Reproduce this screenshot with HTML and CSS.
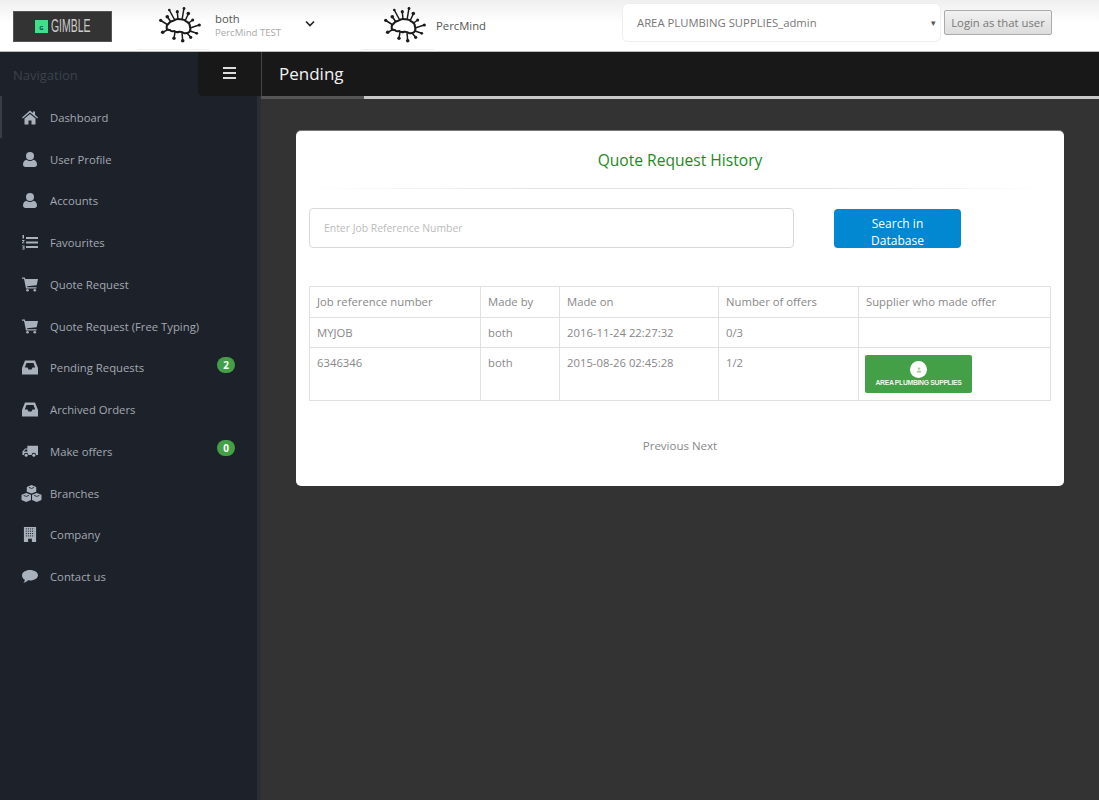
FILE: index.html
```html
<!DOCTYPE html>
<html lang="en">
<head>
    <meta charset="UTF-8">
    <meta name="viewport" content="width=device-width, initial-scale=1.0">
    <title>Pending</title>
    <link rel="stylesheet" href="styles.css">
</head>
<body>
    <svg class="defs" width="0" height="0">
        <symbol id="brain" viewBox="0 0 44 38">
            <g fill="none" stroke="#1a1a1a" stroke-width="1.500">
                <path d="M7.700 21.300C7.500 19 8 17.500 9.300 17c1-2 3-3 5-3.300 2-1.500 5-2 6.700-1.400 2.500-.2 5 .6 6.700 2.400 2 1 3.300 3 3.300 5 .6 2 .4 4-.5 5-1.500 1.500-3.500 1.800-5.200 1.600-1.800-1.500-3.500-1.700-5-1.600-1.800.7-3.600.5-5-.7-1.800.5-3.300.2-4-.7-1.500-.2-2.700-.4-3.500-1.300z" stroke-width="2"/>
                <path d="M1 13L9 18M8.300 9.700L12 15M10.300 3L16 13.500M18.300 4.700L19 12.500M25 1L23 13M29.300 7L26 14M33.700 13L29 16.500M40.300 18L31 21M37.700 26.300L31 24M31.700 30.300L28 26M23.700 33.700L23 25.500M15 31.300L16 25M3.700 25.300L9 22.500"/>
            </g>
            <g fill="#1a1a1a">
                <circle cx="1.700" cy="13.300" r="1.600"/><circle cx="8.300" cy="9.700" r="1.800"/><circle cx="10.300" cy="3" r="1.300"/><circle cx="18.300" cy="4.700" r="1.600"/>
                <circle cx="25" cy="1.500" r="1.400"/><circle cx="29.300" cy="6.500" r="1.800"/><circle cx="33.700" cy="13" r="1.500"/><circle cx="40.300" cy="18" r="1.600"/>
                <circle cx="37.700" cy="26.300" r="1.400"/><circle cx="31.700" cy="30.300" r="1.600"/><circle cx="23.700" cy="33.700" r="1.800"/><circle cx="15" cy="31.300" r="1.700"/><circle cx="3.700" cy="25.300" r="1.800"/>
            </g>
        </symbol>
        <symbol id="i-home" viewBox="0 0 16 14"><path d="M8 0l3 2.600V1h2v3.300L16 7l-.8 1L8 2 .8 8 0 7zM2.500 8L8 3.400 13.500 8v6H9.500v-4h-3v4h-4z"/></symbol>
        <symbol id="i-user" viewBox="0 0 14 15"><circle cx="7" cy="4" r="4"/><path d="M0 12.500C0 9.500 2 8 3.500 7.800c1 .8 2.200 1.200 3.500 1.200s2.500-.4 3.500-1.200C12 8 14 9.500 14 12.500c0 1.500-1 2.500-2.500 2.500h-9C1 15 0 14 0 12.500z"/></symbol>
        <symbol id="i-list" viewBox="0 0 16 15"><path d="M4 2h12v2H4zM4 6.500h12v2H4zM4 11h12v2H4zM.5 0H2v3.500H.5zM0 5h2.500v1L1 7.500h1.500v.8H0v-.8L1.500 6H0zM0 10.500h2.500v4H0v-.8h1.500v-.8H.6v-.7h.9v-.9H0z"/></symbol>
        <symbol id="i-cart" viewBox="0 0 16 14"><path d="M0 0h2.800l.5 1.500H16l-1.300 6.200-9.700 1 .3 1H14.500v1.300H4L2 1.300H0z"/><circle cx="5.500" cy="12.700" r="1.300"/><circle cx="12.800" cy="12.700" r="1.300"/></symbol>
        <symbol id="i-inbox" viewBox="0 0 16 14"><path d="M3 0h10l3 7.500V14H0V7.500zM4.500 2.500L2.800 7H5.500L6.500 9h3L10.500 7h2.700L11.500 2.500z" fill-rule="evenodd"/></symbol>
        <symbol id="i-truck" viewBox="0 0 18 13"><path d="M6 0h12v10.500h-2.200a2.500 2.500 0 0 0-5 0H7.200a2.500 2.500 0 0 0-5 0H.5V6.500L3.500 3H6zM2 6.500h4V4.300H4z" fill-rule="evenodd"/><circle cx="4.700" cy="10.700" r="1.700"/><circle cx="13.300" cy="10.700" r="1.700"/></symbol>
        <symbol id="i-cubes" viewBox="0 0 20 16">
            <path d="M10 0l4.500 1.700v4.600L10 8 5.500 6.300V1.700zM5 7.500l4.500 1.700v4.900L5 16 .5 14.100V9.200zM15 7.500l4.500 1.700v4.900L15 16l-4.500-1.900V9.200z"/>
            <path d="M7.500 2.200L10 3.200l2.500-1M2.500 9.800L5 10.800l2.500-1M12.500 9.800l2.500 1 2.500-1" fill="none" stroke="#1d2129" stroke-width="0.800"/>
        </symbol>
        <symbol id="i-building" viewBox="0 0 13 16">
            <path d="M0 0h13v16H0z"/>
            <path d="M2 2h9M2 4.500h9M2 7h9M2 9.500h9" stroke="#1d2129" stroke-dasharray="1.200 1"/>
            <path d="M4.500 12.500h4V16h-4z" fill="#1d2129"/>
        </symbol>
        <symbol id="i-comment" viewBox="0 0 17 14"><path d="M8.500 0C13.200 0 17 2.500 17 5.600s-3.800 5.600-8.500 5.600c-.7 0-1.300 0-2-.1C5 12.600 3 13.600 1.500 14c.8-1 1.400-2 1.500-3.500C1.200 9.500 0 7.700 0 5.600 0 2.500 3.800 0 8.500 0z"/></symbol>
        <symbol id="i-plumber" viewBox="0 0 14 15"><circle cx="7" cy="4" r="3"/><path d="M1 14c0-3 2-5 6-5s6 2 6 5z"/></symbol>
    </svg>

    <header class="topbar">
        <div class="logo"><span class="logo-mark">G</span><span class="logo-text">GIMBLE</span></div>
        <div class="account account-user">
            <svg class="brain"><use href="#brain"/></svg>
            <div class="account-text">
                <div class="account-name">both</div>
                <div class="account-sub">PercMind TEST</div>
            </div>
            <svg class="chevron" viewBox="0 0 10 7"><path d="M1 1.500l4 4 4-4" fill="none" stroke="#222" stroke-width="1.600"/></svg>
        </div>
        <div class="account account-org">
            <svg class="brain"><use href="#brain"/></svg>
            <div class="account-name">PercMind</div>
        </div>
        <div class="user-select">
            <span>AREA PLUMBING SUPPLIES_admin</span>
            <span class="select-arrow">&#9662;</span>
        </div>
        <button class="login-btn" type="button">Login as that user</button>
    </header>

    <div class="layout">
        <aside class="sidebar">
            <div class="nav-head">
                <span class="nav-title">Navigation</span>
                <span class="nav-toggle"><i></i><i></i><i></i></span>
            </div>
            <ul class="nav">
                <li class="active"><svg class="ico"><use href="#i-home"/></svg>Dashboard</li>
                <li><svg class="ico"><use href="#i-user"/></svg>User Profile</li>
                <li><svg class="ico"><use href="#i-user"/></svg>Accounts</li>
                <li><svg class="ico"><use href="#i-list"/></svg>Favourites</li>
                <li><svg class="ico"><use href="#i-cart"/></svg>Quote Request</li>
                <li><svg class="ico"><use href="#i-cart"/></svg>Quote Request (Free Typing)</li>
                <li><svg class="ico"><use href="#i-inbox"/></svg>Pending Requests<span class="badge">2</span></li>
                <li><svg class="ico"><use href="#i-inbox"/></svg>Archived Orders</li>
                <li><svg class="ico"><use href="#i-truck"/></svg>Make offers<span class="badge">0</span></li>
                <li><svg class="ico ico-wide"><use href="#i-cubes"/></svg>Branches</li>
                <li><svg class="ico"><use href="#i-building"/></svg>Company</li>
                <li><svg class="ico"><use href="#i-comment"/></svg>Contact us</li>
            </ul>
        </aside>

        <main class="main">
            <div class="page-title">Pending</div>
            <div class="progress"><div class="progress-done"></div></div>
            <div class="content">
                <section class="card">
                    <h2>Quote Request History</h2>
                    <div class="card-rule"></div>
                    <form class="search">
                        <input type="text" placeholder="Enter Job Reference Number">
                        <button type="button">Search in Database</button>
                    </form>
                    <table>
                        <colgroup>
                            <col class="col-ref"><col class="col-by"><col class="col-on"><col class="col-num"><col>
                        </colgroup>
                        <tr>
                            <th>Job reference number</th>
                            <th>Made by</th>
                            <th>Made on</th>
                            <th>Number of offers</th>
                            <th>Supplier who made offer</th>
                        </tr>
                        <tr>
                            <td>MYJOB</td>
                            <td>both</td>
                            <td>2016-11-24 22:27:32</td>
                            <td>0/3</td>
                            <td></td>
                        </tr>
                        <tr>
                            <td>6346346</td>
                            <td>both</td>
                            <td>2015-08-26 02:45:28</td>
                            <td>1/2</td>
                            <td>
                                <div class="supplier">
                                    <span class="supplier-pic"><svg><use href="#i-plumber"/></svg></span>
                                    <span class="supplier-name">AREA PLUMBING SUPPLIES</span>
                                </div>
                            </td>
                        </tr>
                    </table>
                    <div class="pager">Previous Next</div>
                </section>
            </div>
        </main>
    </div>
</body>
</html>
```

FILE: styles.css
```css
html, body {
    height: 100%;
}
body {
    margin: 0;
    font-family: "Open Sans", sans-serif;
    font-size: 11.3px;
    color: #888;
    background-color: #333;
    overflow: hidden;
    display: flex;
    flex-direction: column;
}
.defs {
    position: absolute;
}

/* top bar */
.topbar {
    height: 52px;
    flex: none;
    box-sizing: border-box;
    display: flex;
    align-items: center;
    padding-left: 13px;
    background: linear-gradient(#efefef, #fff 45%);
    border-bottom: 1px solid #bbb;
}
.logo {
    width: 99px;
    height: 31px;
    box-sizing: border-box;
    margin-top: 1px;
    padding-left: 21px;
    background-color: #333;
    border: 1px solid #555;
    display: flex;
    align-items: center;
    gap: 3px;
}
.logo-mark {
    width: 13px;
    height: 13px;
    background-color: #3fe08a;
    color: #145;
    font-size: 6px;
    font-weight: bold;
    line-height: 17px;
    text-align: center;
}
.logo-text {
    color: #ccc;
    font-family: "Liberation Sans", sans-serif;
    font-size: 18px;
    line-height: 18px;
    width: 41px;
    transform: scaleX(0.58);
    transform-origin: left center;
    white-space: nowrap;
}
.account {
    position: relative;
    display: flex;
    align-items: center;
}
.account::after {
    content: "";
    position: absolute;
    left: -22px;
    top: 49px;
    width: 72px;
    height: 1px;
    background-color: #f0f0f0;
}
.account-user {
    margin-left: 47px;
    width: 225px;
    height: 51px;
}
.account-org {
    width: 238px;
    height: 51px;
}
.brain {
    width: 44px;
    height: 38px;
    margin-top: 1px;
}
.account-text {
    margin-left: 12px;
    margin-top: -1px;
}
.account-name {
    color: #555;
    line-height: 15px;
}
.account-org .account-name {
    margin-left: 8px;
}
.account-sub {
    color: #aaa;
    font-size: 9.6px;
    line-height: 13px;
}
.chevron {
    width: 10px;
    height: 7px;
    margin-left: 24px;
    margin-top: -5px;
}
.user-select {
    width: 319px;
    height: 39px;
    margin-top: -6px;
    box-sizing: border-box;
    padding: 0 4px 0 14px;
    background-color: #fff;
    border: 1px solid #eee;
    border-radius: 6px;
    display: flex;
    align-items: center;
    justify-content: space-between;
    color: #777;
}
.select-arrow {
    font-size: 9px;
    color: #555;
}
.login-btn {
    width: 108px;
    height: 25px;
    margin-left: 3px;
    margin-top: -6px;
    padding: 0;
    font-family: inherit;
    font-size: 11.3px;
    color: #777;
    background: linear-gradient(#f2f2f2, #ddd);
    border: 1px solid #aaa;
    border-radius: 2px;
}

/* sidebar */
.layout {
    flex: 1;
    display: flex;
    min-height: 0;
}
.sidebar {
    width: 261px;
    flex: none;
    box-sizing: border-box;
    background-color: #1d2129;
    border-right: 4px solid #2a2e36;
}
.nav-head {
    height: 43.95px;
    display: flex;
    justify-content: space-between;
}
.nav-title {
    padding-left: 13px;
    color: #3c424d;
    font-size: 13px;
    line-height: 47px;
}
.nav-toggle {
    width: 63px;
    margin-right: -4px;
    background-color: #181818;
    border-bottom-left-radius: 5px;
    display: flex;
    flex-direction: column;
    align-items: center;
    justify-content: center;
    gap: 3px;
    padding-bottom: 2px;
    box-sizing: border-box;
}
.nav-toggle i {
    width: 13px;
    height: 2px;
    background-color: #ddd;
}
.nav {
    list-style: none;
    margin: 0;
    padding: 0;
}
.nav li {
    height: 41.75px;
    box-sizing: border-box;
    padding-left: 50px;
    position: relative;
    color: #a3a9b3;
    line-height: 43px;
}
.nav li.active {
    box-shadow: inset 2px 0 0 #3a3d42;
}
.ico {
    position: absolute;
    left: 22px;
    top: 14px;
    width: 16px;
    height: 15px;
    fill: #a9b1bd;
}
.ico-wide {
    left: 21px;
    top: 13px;
    width: 21px;
    height: 17px;
}
.badge {
    position: absolute;
    left: 217px;
    top: 10.5px;
    width: 18px;
    height: 16px;
    border-radius: 8px;
    background-color: #43a047;
    color: #fff;
    font-size: 10px;
    font-weight: bold;
    line-height: 16px;
    text-align: center;
}

/* main area */
.main {
    flex: 1;
    display: flex;
    flex-direction: column;
    min-width: 0;
    background-color: #333;
}
.page-title {
    height: 44px;
    flex: none;
    padding-left: 17px;
    background-color: #181818;
    border-left: 1px solid #444;
    color: #f2f2f2;
    font-size: 17px;
    line-height: 44px;
}
.progress {
    height: 3px;
    flex: none;
    background-color: #c8c8c8;
}
.progress-done {
    width: 103px;
    height: 3px;
    background-color: #555;
}
.content {
    padding: 32px 35px 0;
}
.card {
    box-sizing: border-box;
    height: 355px;
    padding: 0 13px;
    background-color: #fff;
    border-radius: 5px;
    box-shadow: 0 -1px 0 #777;
}
.card h2 {
    margin: 0;
    padding-top: 18px;
    color: #1c8a1c;
    font-size: 15.6px;
    font-weight: normal;
    line-height: 22px;
    text-align: center;
}
.card-rule {
    height: 1px;
    margin-top: 17px;
    background: linear-gradient(to right, #fff, #e4e4e4 30%, #e4e4e4 70%, #fff);
}
.search {
    display: flex;
    margin-top: 19px;
}
.search input {
    width: 485px;
    height: 40px;
    box-sizing: border-box;
    padding: 0 14px;
    border: 1px solid #d8d8d8;
    border-radius: 4px;
    font-family: inherit;
    font-size: 10.4px;
    outline: none;
}
.search input::placeholder {
    color: #bbb;
}
.search button {
    width: 127px;
    height: 39px;
    margin: 1px 0 0 40px;
    padding: 6px 22px 0;
    border: none;
    border-radius: 4px;
    background-color: #0288d1;
    color: #fff;
    font-family: inherit;
    font-size: 12px;
    line-height: 17px;
    overflow: hidden;
    display: block;
    text-align: center;
    align-self: flex-start;
}
table {
    width: 742px;
    margin-top: 38px;
    border-collapse: collapse;
    table-layout: fixed;
}
.col-ref { width: 171px; }
.col-by { width: 79px; }
.col-on { width: 159px; }
.col-num { width: 140px; }
th, td {
    border: 1px solid #e0e0e0;
    padding: 7px 7px;
    color: #888;
    font-size: 11.3px;
    font-weight: normal;
    line-height: 15px;
    text-align: left;
    vertical-align: top;
}
th {
    height: 15px;
    padding-top: 7px;
    padding-bottom: 8px;
}
td {
    height: 15px;
}
.supplier {
    width: 107px;
    height: 38px;
    margin-left: -1px;
    background-color: #43a047;
    border-radius: 2px;
    display: flex;
    flex-direction: column;
    align-items: center;
    padding-top: 6px;
    box-sizing: border-box;
}
.supplier-pic {
    width: 17px;
    height: 17px;
    background-color: #fff;
    border-radius: 50%;
    display: flex;
    align-items: center;
    justify-content: center;
}
.supplier-pic svg {
    width: 6px;
    height: 6px;
    fill: #a8c8a0;
}
.supplier-name {
    color: #f0f5ee;
    font-family: "Liberation Sans", sans-serif;
    font-size: 6.8px;
    font-weight: bold;
    line-height: 10px;
    letter-spacing: -0.3px;
    white-space: nowrap;
}
.pager {
    margin-top: 37px;
    font-size: 11.5px;
    text-align: center;
    line-height: 16px;
}
```
